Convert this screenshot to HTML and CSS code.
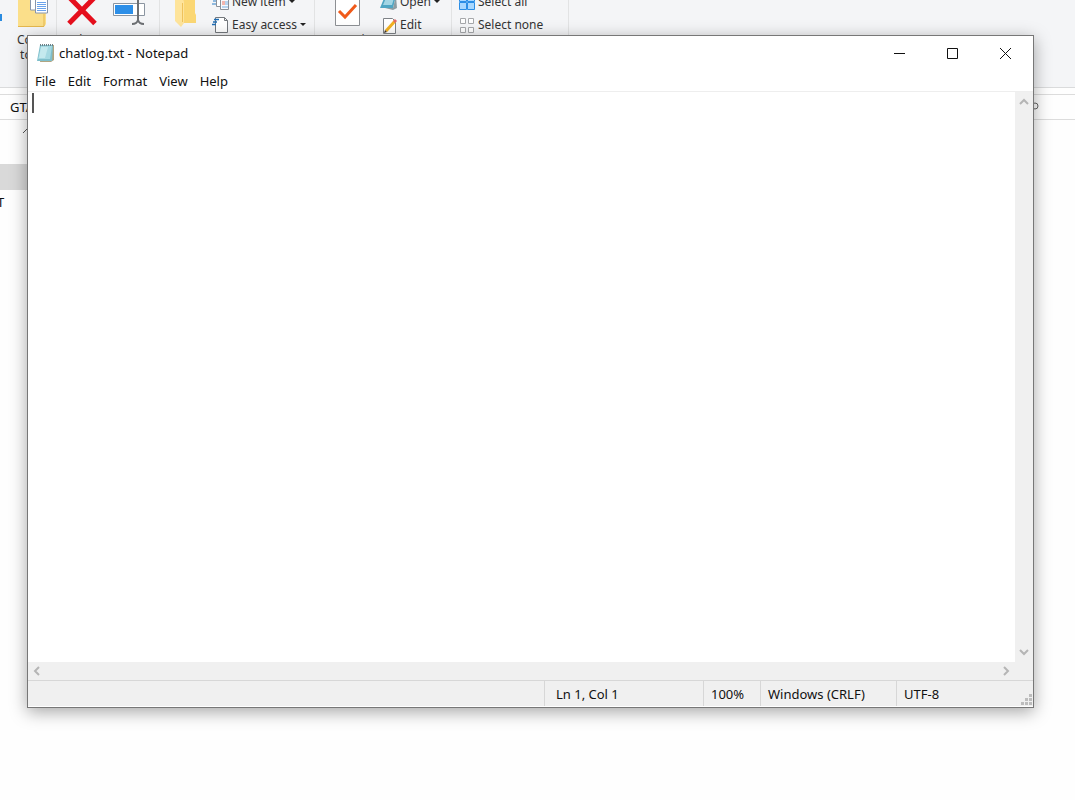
FILE: index.html
```html
<!DOCTYPE html>
<html lang="en">
<head>
  <meta charset="UTF-8">
  <meta name="viewport" content="width=device-width, initial-scale=1.0">
  <title>chatlog.txt - Notepad</title>
  <link rel="stylesheet" href="styles.css">
</head>
<body>
  <div class="explorer">
    <div class="ribbon">
      <div class="ribbon-content">
        <div class="group group-copy">
          <svg class="move-icon" width="2" height="32" viewBox="0 0 2 32"><path d="M0 16h2v7H0z" fill="#2a8be0"/></svg>
          <button class="big">
            <svg width="32" height="32" viewBox="0 0 32 32">
              <path d="M2 0h28v28l-2 3H2z" fill="#fbdf8a"/>
              <path d="M2 30.500h26M28 18v12" stroke="#e5b84e" fill="none"/>
              <path d="M14.500 0h9v14h-9z" fill="#fff" stroke="#8795ab"/>
              <path d="M19.500 0h12v17h-12z" fill="#fff" stroke="#8795ab"/>
              <path d="M21 6.500h9M21 8.500h9M21 10.500h9M21 12.500h9M21 14.500h9" stroke="#6ba3ec"/>
            </svg>
            <span>Copy<br>to <i class="arrow inline"></i></span>
          </button>
        </div>
        <div class="group group-organize">
          <button class="big">
            <svg width="32" height="32" viewBox="0 0 32 32">
              <path d="M4 2l25 25.500M28 2L3 27.500" stroke="#e50f1d" stroke-width="5"/>
            </svg>
            <span>Delete</span>
          </button>
          <button class="big wide">
            <svg width="36" height="32" viewBox="0 0 36 32">
              <path d="M2.500 7.500h31v12h-31z" fill="#fff" stroke="#8b95a1"/>
              <path d="M4 9h18v9H4z" fill="#2d8fe8"/>
              <path d="M27 0v26M21 28q5 0 6-4q1 4 6 4" stroke="#6c6f73" stroke-width="2" fill="none"/>
            </svg>
            <span>Rename</span>
          </button>
        </div>
        <div class="group group-new">
          <button class="big">
            <svg width="32" height="32" viewBox="0 0 32 32">
              <path d="M11 0h14v17l1 2v8H12z" fill="#fbd774"/>
              <path d="M5 0h7l2 6v21l-3 4l-6-6z" fill="#fee49b"/>
              <path d="M12.500 7v19" stroke="#efc25b" fill="none"/>
            </svg>
            <span>New<br>folder</span>
          </button>
          <div class="stack">
            <button class="small">
              <svg width="18" height="18" viewBox="0 0 18 18">
                <path d="M1 8h5M0 11h4" stroke="#2b7fc6"/>
                <path d="M4.500 3.500h8v10h-8z" fill="#fff" stroke="#8b9199"/>
                <path d="M8.500 6.500h8v10h-8z" fill="#f7f9fc" stroke="#8b9199"/>
                <path d="M10 8h3v4h-3z" fill="#f2b6ae"/><path d="M13 8h3v4h-3zM10 13h6v2h-6z" fill="#b7d4ef"/>
              </svg>
              New item <i class="arrow"></i>
            </button>
            <button class="small">
              <svg width="18" height="18" viewBox="0 0 18 18">
                <path d="M3.500 1.500h9l3 3v12h-12z" fill="#fff" stroke="#74787d"/>
                <path d="M12.500 1.500v3h3" fill="none" stroke="#74787d"/>
                <path d="M2 3.500h5M1 6h4M0 8.500h4" stroke="#1f6eb5" stroke-width="1.500"/>
              </svg>
              Easy access <i class="arrow"></i>
            </button>
          </div>
        </div>
        <div class="group group-open">
          <button class="big wide">
            <svg width="32" height="32" viewBox="0 0 32 32">
              <path d="M3.500 0v29.500h24V0" fill="#fff" stroke="#8d9094"/>
              <path d="M7 15l6 6L24 9" fill="none" stroke="#f05a1a" stroke-width="3"/>
            </svg>
            <span>Properties</span>
          </button>
          <div class="stack">
            <button class="small">
              <svg width="18" height="18" viewBox="0 0 18 18">
                <path d="M5 3h11l-3 12H0z" fill="#4fa5c3"/>
                <path d="M16 3l1 12l-4 2l-8-2h8z" fill="#8d9ca2"/>
                <path d="M6 5h8l-2 7H3z" fill="#a2d5e4"/>
              </svg>
              Open <i class="arrow"></i>
            </button>
            <button class="small">
              <svg width="18" height="18" viewBox="0 0 18 18">
                <path d="M3.500 2.500h9l3 3v12h-12z" fill="#fff" stroke="#7e8287"/>
                <path d="M6 15L15 5" stroke="#f3b221" stroke-width="3"/>
                <path d="M14 6l2-2" stroke="#e2696a" stroke-width="3"/>
                <path d="M4 17l1-3 2 2z" fill="#40362b"/>
              </svg>
              Edit
            </button>
          </div>
        </div>
        <div class="group group-select">
          <div class="stack">
            <button class="small">
              <svg width="17" height="18" viewBox="0 0 17 18">
                <path d="M.5 2.500h7v6h-7zM8.500 2.500h7v6h-7zM.5 9.500h7v7h-7zM8.500 9.500h7v7h-7z" fill="#a9d8ff" stroke="#2b8ee6"/>
              </svg>
              Select all
            </button>
            <button class="small">
              <svg width="17" height="18" viewBox="0 0 17 18">
                <path d="M1.500 2.500h5v5h-5zM9.500 2.500h5v5h-5zM1.500 11.500h5v5h-5zM9.500 11.500h5v5h-5z" fill="#fff" stroke="#a6a8ab"/>
              </svg>
              Select none
            </button>
          </div>
        </div>
      </div>
    </div>
    <div class="address-bar">
      <span class="crumb">GTA</span>
      <svg class="search" width="10" height="12" viewBox="0 0 10 12">
        <circle cx="6" cy="5" r="3" fill="none" stroke="#666"/><path d="M4 7l-3 4" stroke="#666"/>
      </svg>
    </div>
    <div class="nav">
      <svg class="nav-up" width="10" height="6" viewBox="0 0 10 6"><path d="M1 5l4-4 4 4" fill="none" stroke="#555"/></svg>
      <div class="nav-selected"></div>
      <div class="nav-item">T</div>
    </div>
  </div>

  <div class="notepad">
    <div class="titlebar">
      <svg class="app-icon" width="18" height="20" viewBox="0 0 18 20">
        <path d="M5 2h12v15l-3 2H3z" fill="#b0a582"/>
        <path d="M3 2h13l-1 16H0z" fill="#7fbfcb"/>
        <path d="M4 3h11l-2 13H1z" fill="#a5d9e2"/>
        <path d="M4 4h7L8 15H2z" fill="#c4e9ee"/>
        <path d="M3 2h13" stroke="#6d8188" stroke-width="2" stroke-dasharray="1 1"/>
      </svg>
      <span class="title">chatlog.txt - Notepad</span>
      <button class="win-button" aria-label="Minimize">
        <svg width="12" height="12" viewBox="0 0 12 12"><path d="M0 6.500h11" stroke="#111"/></svg>
      </button>
      <button class="win-button" aria-label="Maximize">
        <svg width="12" height="12" viewBox="0 0 12 12"><path d="M.5 1.500h10v10H.5z" fill="none" stroke="#111"/></svg>
      </button>
      <button class="win-button" aria-label="Close">
        <svg width="12" height="12" viewBox="0 0 12 12"><path d="M0 1l11 11M11 1L0 12" stroke="#111"/></svg>
      </button>
    </div>
    <div class="menubar">
      <button>File</button>
      <button>Edit</button>
      <button>Format</button>
      <button>View</button>
      <button>Help</button>
    </div>
    <div class="editor">
      <div class="text-area">
        <textarea aria-label="Text editor" spellcheck="false"></textarea>
        <div class="caret"></div>
      </div>
      <div class="scroll-v">
        <button aria-label="Scroll up"><svg width="10" height="8" viewBox="0 0 10 8"><path d="M1 6l4-4 4 4"/></svg></button>
        <button aria-label="Scroll down"><svg width="10" height="8" viewBox="0 0 10 8"><path d="M1 2l4 4 4-4"/></svg></button>
      </div>
      <div class="scroll-h">
        <button aria-label="Scroll left"><svg width="8" height="10" viewBox="0 0 8 10"><path d="M6 1L2 5l4 4"/></svg></button>
        <button aria-label="Scroll right"><svg width="8" height="10" viewBox="0 0 8 10"><path d="M2 1l4 4-4 4"/></svg></button>
      </div>
    </div>
    <div class="statusbar">
      <div class="cell position">Ln 1, Col 1</div>
      <div class="cell zoom">100%</div>
      <div class="cell line-ending">Windows (CRLF)</div>
      <div class="cell encoding">UTF-8</div>
      <svg class="grip" width="11" height="11" viewBox="0 0 11 11">
        <path d="M8 0h3v3H8zM4 4h3v3H4zM8 4h3v3H8zM0 8h3v3H0zM4 8h3v3H4zM8 8h3v3H8z" fill="#bdbdbd"/>
      </svg>
    </div>
  </div>
</body>
</html>
```
FILE: styles.css
```css
* {
  box-sizing: border-box;
}
body {
  margin: 0;
  position: relative;
  height: 100vh;
  overflow: hidden;
  background: #fefefe;
  font-family: "Noto Sans", "Open Sans", sans-serif;
  font-size: 13px;
  color: #111;
}
button {
  padding: 0;
  border: none;
  background: none;
  font: inherit;
  color: inherit;
}
svg {
  display: block;
  flex: none;
}

/* explorer window behind */
.ribbon {
  height: 88px;
  overflow: hidden;
  background: #f4f5f7;
  border-bottom: 1px solid #dadbdc;
  font-size: 12px;
  color: #333;
}
.ribbon-content {
  display: flex;
  height: 97px;
  margin-top: -10px;
}
.group {
  display: flex;
  align-items: flex-start;
  border-right: 1px solid #e2e3e4;
}
.group-copy {
  width: 57px;
}
.group-organize {
  width: 103px;
  padding-left: 3px;
}
.group-new {
  width: 155px;
  padding-left: 4px;
}
.group-open {
  width: 137px;
  padding-left: 4px;
}
.group-select {
  width: 117px;
  padding-left: 7px;
}
.move-icon {
  margin: 8px 8px 0 0;
}
.big {
  display: flex;
  flex-direction: column;
  align-items: center;
  gap: 4px;
  width: 44px;
  padding-top: 6px;
  line-height: 15px;
}
.group-copy .big {
  align-items: flex-end;
  width: 38px;
}
.group-copy span {
  margin-right: 3px;
}
.wide {
  width: 50px;
}
.group-open .wide {
  width: 58px;
}
.stack {
  display: flex;
  flex-direction: column;
}
.group-new .stack {
  margin-left: 4px;
}
.group-open .stack {
  margin-left: 3px;
}
.small {
  display: flex;
  align-items: center;
  gap: 2px;
  height: 23px;
  white-space: nowrap;
}
.arrow {
  margin-left: 1px;
  border: 3px solid transparent;
  border-top-color: #222;
  border-bottom: none;
}
.inline {
  display: inline-block;
  margin-bottom: 3px;
}
.address-bar {
  display: flex;
  align-items: center;
  justify-content: space-between;
  height: 26px;
  margin-top: 6px;
  padding: 0 36px 0 10px;
  border-top: 1px solid #dcdcdc;
  border-bottom: 1px solid #dcdcdc;
}
.nav {
  width: 120px;
}
.nav-up {
  margin: 8px 0 0 22px;
}
.nav-selected {
  height: 26px;
  margin-top: 30px;
  background: #d9d9d9;
}
.nav-item {
  line-height: 24px;
  margin-left: -3px;
}

/* notepad window */
.notepad {
  position: absolute;
  top: 35px;
  right: 41px;
  bottom: 92px;
  left: 27px;
  display: flex;
  flex-direction: column;
  background: #fff;
  border: 1px solid #777;
  box-shadow: 0 4px 16px rgba(0, 0, 0, 0.35);
}
.titlebar {
  display: flex;
  align-items: center;
  height: 33px;
  padding: 0 1px 0 9px;
}
.title {
  flex: 1;
  margin-left: 4px;
}
.win-button {
  display: flex;
  align-items: center;
  justify-content: center;
  width: 53px;
  height: 33px;
}
.menubar {
  display: flex;
  gap: 12px;
  height: 23px;
  padding: 1px 0 0 7px;
  border-bottom: 1px solid #eee;
}
.editor {
  flex: 1;
  display: grid;
  grid-template-columns: 1fr 18px;
  grid-template-rows: 1fr 18px;
  min-height: 0;
  background: #f0f0f0;
}
.text-area {
  position: relative;
  background: #fff;
}
textarea {
  display: block;
  width: 100%;
  height: 100%;
  padding: 1px 4px;
  border: none;
  outline: none;
  resize: none;
  background: #fff;
  font: inherit;
}
.caret {
  position: absolute;
  top: 1px;
  left: 4px;
  width: 2px;
  height: 20px;
  background: #555;
}
.scroll-v,
.scroll-h {
  display: flex;
  justify-content: space-between;
}
.scroll-v {
  flex-direction: column;
}
.scroll-v button,
.scroll-h button {
  display: flex;
  align-items: center;
  justify-content: center;
  width: 18px;
  height: 20px;
}
.scroll-h button {
  height: 18px;
}
.scroll-v path,
.scroll-h path {
  fill: none;
  stroke: #b5b5b5;
  stroke-width: 2;
}
.statusbar {
  position: relative;
  display: flex;
  justify-content: flex-end;
  height: 27px;
  background: #f0f0f0;
  border-top: 1px solid #d7d7d7;
  border-bottom: 1px solid #fff;
  line-height: 26px;
}
.cell {
  padding-left: 7px;
  border-left: 1px solid #d7d7d7;
}
.position {
  width: 159px;
  padding-left: 11px;
}
.zoom {
  width: 57px;
}
.line-ending {
  width: 136px;
}
.encoding {
  width: 137px;
}
.grip {
  position: absolute;
  right: 1px;
  bottom: 1px;
}
```
